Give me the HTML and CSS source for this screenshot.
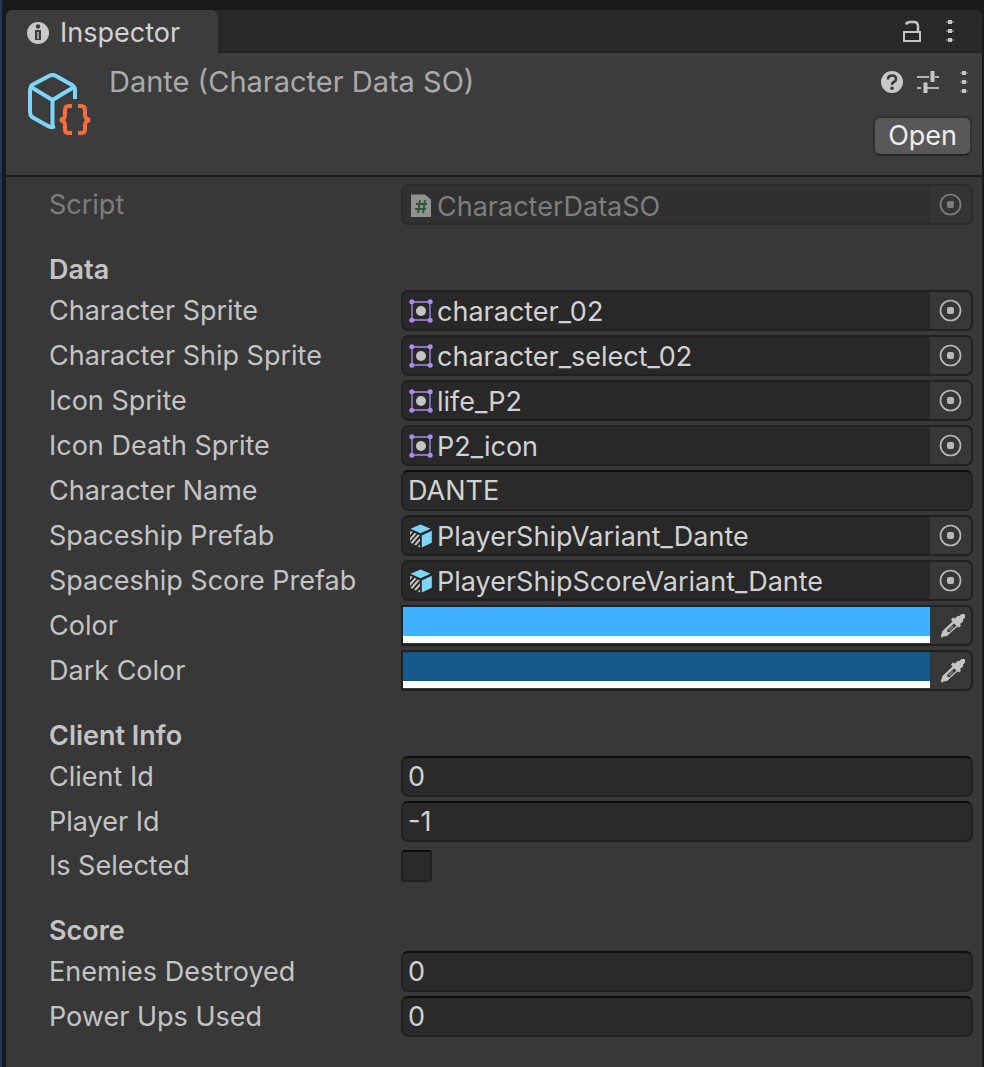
FILE: index.html
```html
<!DOCTYPE html>
<html lang="en">
<head>
<meta charset="utf-8">
<meta name="viewport" content="width=device-width, initial-scale=1">
<title>Inspector</title>
<link rel="stylesheet" href="styles.css">
</head>
<body>
<svg class="defs" aria-hidden="true">
  <clipPath id="face"><path d="M1 6.500l10 5V23.500L1 18.500z"/></clipPath>
  <symbol id="dots" viewBox="0 0 8 24"><path fill="#6a6a6a" d="M0 2h8v2H0zM0 11h8v2H0zM0 20h8v2H0z"/><path fill="#c4c4c4" d="M2 1h4v4H2zM2 10h4v4H2zM2 19h4v4H2z"/></symbol>
  <symbol id="target" viewBox="0 0 24 24"><circle cx="11.500" cy="11.500" r="10" fill="none" stroke="currentColor" stroke-width="1.700"/><rect x="8" y="8" width="7" height="7" rx="2" fill="currentColor"/></symbol>
  <symbol id="sprite" viewBox="0 0 24 24"><path d="M3 3h18v18H3z" fill="none" stroke="#a58be8" stroke-width="1.300"/><g fill="#a98df0"><circle cx="2.800" cy="2.800" r="2.500"/><circle cx="21.200" cy="2.800" r="2.500"/><circle cx="2.800" cy="21.200" r="2.500"/><circle cx="21.200" cy="21.200" r="2.500"/></g><circle cx="12" cy="12" r="5" fill="#c4c4c4"/></symbol>
  <symbol id="prefab" viewBox="0 0 24 24"><path fill="#7fd6fd" d="M11.500.500 21.500 4.800 11.500 9.300 1.500 4.800zM12.800 11.500l10-4.800v12L12.800 23.500z"/><g clip-path="url(#face)"><path d="M-2 13.500 9-1M-2 19 13 2M0 22 14 6M3 24.500 16 10M7 26 19 13" stroke="#c4c4c4" stroke-width="2" fill="none"/></g></symbol>
  <symbol id="dropper" viewBox="0 0 26 26"><path fill="#c4c4c4" fill-rule="evenodd" d="M19.500 3 21.500 1h2.500Q25 1 25 2v2.500L23 6.500Q24 8.500 22 9.500L20 11l1 1.500-2 2-1.500-1L7 23l-3.500.500L1.500 25 1 22.500 2.500 18 12.500 8.500l-1.500-2 2-2 2 1L17 3.500Q18.500 2.300 19.500 3zM14 10.500l-7 6.500.500 2 2 .200 7-6.700z"/><path d="m9 17.500 4-4" stroke="#777" stroke-width="2"/></symbol>
</svg>
<div class="window">
  <div class="tabbar">
    <h1 class="tab">
      <svg class="icon24" viewBox="0 0 24 24" aria-hidden="true"><circle cx="12" cy="12" r="11" fill="#c8c8c8"/><circle cx="12" cy="5.500" r="2.200" fill="#3c3c3c"/><path fill="#3c3c3c" d="M9 9h6v10H9z"/><path fill="#9b9b9b" d="M11 11h2v7h-2z"/></svg>
      Inspector
    </h1>
    <div class="tools tab-tools">
      <button class="tool" aria-label="Lock"><svg class="icon24" viewBox="0 0 24 24"><path d="M4 13h16v9H4z" fill="none" stroke="#c4c4c4" stroke-width="2"/><path d="M18 12V7.500Q18 3 14 3h-4Q7 3 6 5.500" fill="none" stroke="#c4c4c4" stroke-width="2.500"/></svg></button>
      <button class="tool" aria-label="Tab menu"><svg class="dots"><use href="#dots"/></svg></button>
    </div>
  </div>
  <header class="header">
    <svg class="asset" viewBox="0 0 66 64" aria-hidden="true">
      <g fill="none" stroke="#7fd6fd" stroke-width="4" stroke-linejoin="round"><path d="M48 27V18Q48 15 45 13L29 4Q25.500 2 22 4L5 13Q3 15 3 18V40Q3 43 5 45L21 54Q24 56 28 54.500"/><path d="M4 15 25.500 28 47 15M25.500 28V54"/></g>
      <g fill="none" stroke="#ff6d3a" stroke-width="4"><path d="M45 34h-3Q38 34 38 38v5Q38 47 33 48Q38 49 38 53v5Q38 61 42 61h3M51 34h3Q58 34 58 38v5Q58 47 63 48Q58 49 58 53v5Q58 61 54 61h-3"/></g>
    </svg>
    <h2 class="title">Dante (Character Data SO)</h2>
    <div class="actions">
      <div class="tools">
        <button class="tool" aria-label="Help"><svg class="icon24" viewBox="0 0 24 24"><circle cx="12" cy="12" r="11" fill="#c8c8c8"/><path d="M8 9.500Q8 5.500 12 5.500t4 3.500Q16 11 13.500 12.200Q12 13 12 15" fill="none" stroke="#3c3c3c" stroke-width="2.600"/><circle cx="12" cy="18.300" r="1.800" fill="#3c3c3c"/></svg></button>
        <button class="tool" aria-label="Presets"><svg class="icon24" viewBox="0 0 24 24"><path d="M1 7h12M19 7h4M1 18h4M11 18h12" stroke="#b4b4b4" stroke-width="1.800"/><path d="M16.500 1v11M9.500 12.500v10.500" stroke="#c8c8c8" stroke-width="4"/></svg></button>
        <button class="tool" aria-label="Asset menu"><svg class="dots"><use href="#dots"/></svg></button>
      </div>
      <button class="open">Open</button>
    </div>
  </header>
  <main class="body">
    <section class="group">
      <div class="row disabled"><label for="script">Script</label><div class="field"><svg class="kind" viewBox="0 0 24 24"><path fill="#919191" d="M2 1.500h14l6 5V24H2z"/><path d="m11 7-2 13M16 7l-2 13M7 11h11M6 16h11" stroke="#2d5730" stroke-width="1.900"/></svg><input id="script" class="value" value="CharacterDataSO" disabled><button class="pick" aria-label="Select script" disabled><svg class="icon24"><use href="#target"/></svg></button></div></div>
    </section>
    <section class="group">
      <h3>Data</h3>
      <div class="row"><label for="cs">Character Sprite</label><div class="field"><svg class="kind"><use href="#sprite"/></svg><input id="cs" class="value" value="character_02" readonly><button class="pick" aria-label="Select character sprite"><svg class="icon24"><use href="#target"/></svg></button></div></div>
      <div class="row"><label for="css">Character Ship Sprite</label><div class="field"><svg class="kind"><use href="#sprite"/></svg><input id="css" class="value" value="character_select_02" readonly><button class="pick" aria-label="Select ship sprite"><svg class="icon24"><use href="#target"/></svg></button></div></div>
      <div class="row"><label for="is">Icon Sprite</label><div class="field"><svg class="kind"><use href="#sprite"/></svg><input id="is" class="value" value="life_P2" readonly><button class="pick" aria-label="Select icon sprite"><svg class="icon24"><use href="#target"/></svg></button></div></div>
      <div class="row"><label for="ids">Icon Death Sprite</label><div class="field"><svg class="kind"><use href="#sprite"/></svg><input id="ids" class="value" value="P2_icon" readonly><button class="pick" aria-label="Select death sprite"><svg class="icon24"><use href="#target"/></svg></button></div></div>
      <div class="row"><label for="cn">Character Name</label><input id="cn" class="text" value="DANTE"></div>
      <div class="row"><label for="sp">Spaceship Prefab</label><div class="field"><svg class="kind"><use href="#prefab"/></svg><input id="sp" class="value" value="PlayerShipVariant_Dante" readonly><button class="pick" aria-label="Select prefab"><svg class="icon24"><use href="#target"/></svg></button></div></div>
      <div class="row"><label for="ssp">Spaceship Score Prefab</label><div class="field"><svg class="kind"><use href="#prefab"/></svg><input id="ssp" class="value" value="PlayerShipScoreVariant_Dante" readonly><button class="pick" aria-label="Select score prefab"><svg class="icon24"><use href="#target"/></svg></button></div></div>
      <div class="row"><label for="col">Color</label><div class="field color"><input id="col" class="swatch" type="color" value="#40b0ff"><button class="pick dropper" aria-label="Pick color"><svg class="icon26"><use href="#dropper"/></svg></button></div></div>
      <div class="row"><label for="dcol">Dark Color</label><div class="field color"><input id="dcol" class="swatch" type="color" value="#13598c"><button class="pick dropper" aria-label="Pick dark color"><svg class="icon26"><use href="#dropper"/></svg></button></div></div>
    </section>
    <section class="group">
      <h3>Client Info</h3>
      <div class="row"><label for="ci">Client Id</label><input id="ci" class="text" value="0"></div>
      <div class="row"><label for="pi">Player Id</label><input id="pi" class="text" value="-1"></div>
      <div class="row toggle"><label for="sel">Is Selected</label><input id="sel" class="check" type="checkbox"></div>
    </section>
    <section class="group">
      <h3>Score</h3>
      <div class="row"><label for="ed">Enemies Destroyed</label><input id="ed" class="text" value="0"></div>
      <div class="row"><label for="pu">Power Ups Used</label><input id="pu" class="text" value="0"></div>
    </section>
  </main>
</div>
</body>
</html>
```
FILE: styles.css
```css
* { box-sizing: border-box; }
html, body { min-height: 100%; }
body {
  margin: 0;
  display: flex;
  min-height: 100vh;
  padding: 10px 2px 0 4px;
  border-left: 2px solid #1f3a57;
  background: #191919;
  color: #c4c4c4;
  font: 400 27px/32px Inter, "Liberation Sans", sans-serif;
  font-optical-sizing: none;
}
.defs { position: absolute; width: 0; height: 0; }
svg { display: block; flex: none; }
button, input { font: inherit; color: inherit; margin: 0; border: 0; padding: 0; background: none; min-width: 0; }
h1, h2, h3 { margin: 0; font: inherit; }
.icon24 { width: 24px; height: 24px; }
.icon26 { width: 26px; height: 26px; }
.dots { width: 8px; height: 24px; }
.window { flex: 1; min-width: 0; background: #383838; border-radius: 7px 7px 0 0; }

.tabbar { display: flex; justify-content: space-between; background: #282828; border-radius: 7px 7px 0 0; height: 43px; }
.tab { display: flex; align-items: center; gap: 10px; padding: 2px 38px 0 20px; background: #3c3c3c; border-radius: 7px 7px 0 0; color: #d2d2d2; }
.tools { display: flex; align-items: center; }
.tab-tools { flex: 1; justify-content: flex-end; gap: 22px; padding: 0 28px 0 0; border-bottom: 2px solid #232323; }
.tool { display: block; }

.header { display: flex; align-items: flex-start; height: 124px; padding: 18px 10px 0 21px; background: #3c3c3c; border-bottom: 2px solid #1a1a1a; }
.asset { width: 66px; height: 64px; margin-top: 1px; }
.title { flex: 1; padding-left: 16px; margin-top: -5px; color: #aaa; font-size: 29px; }
.actions { display: flex; flex-direction: column; align-items: flex-end; gap: 22px; }
.actions .tools { gap: 12px; margin-top: -1px; padding-right: 4px; }
.actions .dots { margin-left: 8px; }
.open { height: 40px; padding: 0 13px; border: 2px solid #303030; border-bottom-color: #242424; border-radius: 7px; background: #585858; color: #eee; line-height: 36px; }

.body { padding: 7px 9px 30px 43px; }
.group { display: grid; gap: 4px; }
h3 { padding-top: 29px; font-weight: 600; }
.row { display: grid; grid-template-columns: 352px minmax(0, 1fr); align-items: center; min-height: 41px; }
.row label { white-space: nowrap; }
.toggle { min-height: 40px; }
.field, .text { width: 100%; height: 41px; border: 2px solid #202020; border-radius: 7px; background: #2a2a2a; color: #d2d2d2; }
.field { display: flex; align-items: center; background: #282828; overflow: hidden; }
.text { padding: 0 5px; border-color: #212121; border-top-color: #0d0d0d; }
.kind { width: 24px; height: 24px; margin-left: 6px; }
.value { flex: 1; height: 37px; padding: 2px 0 0 4px; }
.pick { display: grid; place-items: center; width: 41px; height: 37px; background: #373737; color: #b8b8b8; }
.disabled label { color: #7e7e7e; }
.disabled .field { border-color: #2b2b2b; background: #303030; color: #7e7e7e; }
.disabled .value { padding-top: 3px; }
.disabled .pick { background: #343434; color: #7e7e7e; }
.color { border-radius: 0 7px 7px 0; background: #383838; }
.dropper { padding-left: 4px; }
.swatch { flex: 1; height: 36px; border-bottom: 7px solid #fff; appearance: none; border-radius: 0; align-self: flex-start; }
.swatch::-webkit-color-swatch-wrapper { padding: 0; }
.swatch::-webkit-color-swatch { border: 0; border-radius: 0; }
.check { width: 31px; height: 32px; appearance: none; border: 2px solid #212121; border-top-color: #0d0d0d; border-radius: 3px; background: #2a2a2a; }
```
